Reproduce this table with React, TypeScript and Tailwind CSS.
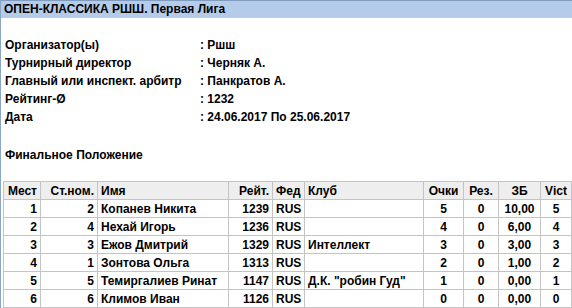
import React from "react";

const info = [
  ["Организатор(ы)", ": Ршш"],
  ["Турнирный директор", ": Черняк А."],
  ["Главный или инспект. арбитр", ": Панкратов А."],
  ["Рейтинг-Ø", ": 1232"],
  ["Дата", ": 24.06.2017 По 25.06.2017"],
];

const rows = [
  [1, 2, "Копанев Никита", 1239, "RUS", "", 5, 0, "10,00", 5],
  [2, 4, "Нехай Игорь", 1236, "RUS", "", 4, 0, "6,00", 4],
  [3, 3, "Ежов Дмитрий", 1329, "RUS", "Интеллект", 3, 0, "3,00", 3],
  [4, 1, "Зонтова Ольга", 1313, "RUS", "", 2, 0, "1,00", 2],
  [5, 5, "Темиргалиев Ринат", 1147, "RUS", 'Д.К. "робин Гуд"', 1, 0, "0,00", 1],
  [6, 6, "Климов Иван", 1126, "RUS", "", 0, 0, "0,00", 0],
];

const cols = [
  { title: "Мест", w: "w-[37px]", align: "text-right" },
  { title: "Ст.ном.", w: "w-[57px]", align: "text-right" },
  { title: "Имя", w: "w-[131px]", align: "text-left" },
  { title: "Рейт.", w: "w-[44px]", align: "text-right" },
  { title: "Фед", w: "w-[32px]", align: "text-left" },
  { title: "Клуб", w: "w-[119px]", align: "text-left" },
  { title: "Очки", w: "w-[40px]", align: "text-center" },
  { title: "Рез.", w: "w-[35px]", align: "text-center" },
  { title: "ЗБ", w: "w-[42px]", align: "text-center" },
  { title: "Vict", w: "w-[31px]", align: "text-center" },
];

export default function App() {
  return (
    <div className="w-[572px] h-[308px] overflow-hidden bg-white border-l border-[#8ba5c6] font-['Liberation_Sans',Arial,sans-serif] text-[12px] font-bold text-black">
      {/* Title bar */}
      <div className="h-[18px] bg-[#b5cbea] border-t border-[#7f9cbf] pl-[3px] leading-[17px]">
        ОПЕН-КЛАССИКА РШШ. Первая Лига
      </div>

      {/* Tournament info */}
      <div className="pt-[18px] pl-[4px]">
        {info.map(([k, v]) => (
          <div key={k} className="flex h-[18px] leading-[18px]">
            <div className="w-[195px]">{k}</div>
            <div>{v}</div>
          </div>
        ))}
      </div>

      <div className="pt-[20px] pl-[4px] h-[18px] leading-[18px] box-content">Финальное Положение</div>

      {/* Standings */}
      <div className="pt-[17px] pl-[2px]">
        <table className="border-collapse table-fixed w-[568px]">
          <thead>
            <tr className="h-[18px] bg-[#eeeeee]">
              {cols.map((c) => (
                <th key={c.title} className={`${c.w} ${c.align} border border-[#c4c4c4] px-[3px] py-0 font-bold leading-[16px]`}>
                  {c.title}
                </th>
              ))}
            </tr>
          </thead>
          <tbody>
            {rows.map((r) => (
              <tr key={r[0]} className="h-[18px]">
                {r.map((cell, i) => (
                  <td key={i} className={`${cols[i].align} border border-[#c4c4c4] px-[3px] py-0 leading-[16px] whitespace-nowrap`}>
                    {cell}
                  </td>
                ))}
              </tr>
            ))}
          </tbody>
        </table>
      </div>
    </div>
  );
}
